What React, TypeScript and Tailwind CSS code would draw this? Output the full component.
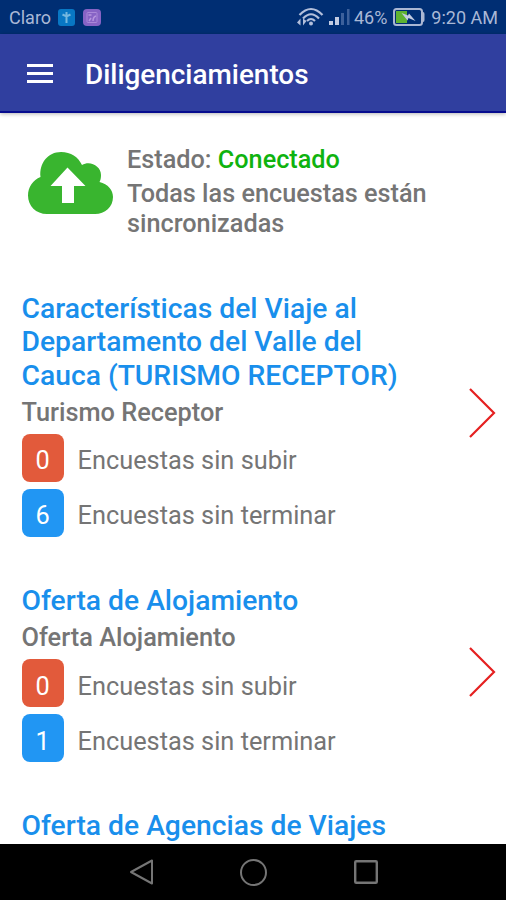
type Survey = {
  title: string[]
  subtitle?: string
  pendingUpload?: number
  pendingFinish?: number
}

const surveys: Survey[] = [
  {
    title: ['Características del Viaje al', 'Departamento del Valle del', 'Cauca (TURISMO RECEPTOR)'],
    subtitle: 'Turismo Receptor',
    pendingUpload: 0,
    pendingFinish: 6,
  },
  {
    title: ['Oferta de Alojamiento'],
    subtitle: 'Oferta Alojamiento',
    pendingUpload: 0,
    pendingFinish: 1,
  },
  { title: ['Oferta de Agencias de Viajes'] },
]

function StatusBar() {
  return (
    <div className="flex h-[34px] shrink-0 items-center bg-[#002e73] pl-[9px] pr-[8px] text-[18px] leading-[34px] text-[#a9b8d6]">
      <span className="pt-[2px]">Claro</span>
      <svg className="ml-[7px]" width="17" height="17" viewBox="0 0 17 17">
        <rect width="17" height="17" rx="3" fill="#0877c4" />
        <path d="M8.5 3v11M4.5 5.500l4 2 4-2" stroke="#74b7df" strokeWidth="2" fill="none" />
      </svg>
      <svg className="ml-[8px]" width="18" height="17" viewBox="0 0 18 17">
        <rect width="18" height="17" rx="4" fill="#8763c5" />
        <rect x="4" y="3.5" width="10" height="10" rx="1" stroke="#a988d8" fill="none" />
        <path d="M6 12l2-3M10 12q0-4 3-5M5.5 6h3" stroke="#b695df" strokeWidth="1.5" fill="none" />
      </svg>

      <div className="flex-1" />

      {/* Wifi */}
      <svg className="mr-[2px]" width="27" height="20" viewBox="0 0 27 20" fill="none" stroke="#b3bfdb" strokeWidth="2.2">
        <path d="M2.5 8Q14 -4 25.5 8M6 11.500Q14 3 22 11.500M10 14Q14 10 18 14" />
        <circle cx="14" cy="16.500" r="2" fill="#b3bfdb" stroke="none" />
        <path d="M0 15.500l3.500-4v7zM9.500 14l-3.500 4.500v-7z" fill="#b3bfdb" stroke="none" />
      </svg>

      {/* Signal */}
      <svg className="ml-[3px]" width="21" height="18" viewBox="0 0 21 18">
        <rect x="0" y="13" width="4" height="4" fill="#c3cce2" />
        <rect x="6" y="9" width="4" height="8" fill="#c3cce2" />
        <rect x="12" y="5" width="3" height="12" fill="#3c609b" />
        <rect x="18" y="1" width="2.500" height="16" fill="#3c609b" />
      </svg>
      <span className="ml-[4px] pt-[2px]">46%</span>

      {/* Battery */}
      <svg className="ml-[6px]" width="32" height="18" viewBox="0 0 32 18">
        <rect x="3" y="3" width="11" height="12" fill="#5eb432" />
        <rect x="1" y="1" width="28" height="16" rx="2.500" stroke="#aab7d3" strokeWidth="2" fill="none" />
        <path d="M30 4q1.500 0 1.500 2v6q0 2-1.500 2z" fill="#aab7d3" />
        <path d="M8.500 5l6.500 2.500 1-2 6.500 7.500-7-3-1 2.500z" fill="#c3cce2" />
      </svg>
      <span className="ml-[6px] pt-[2px]">9:20 AM</span>
    </div>
  )
}

function Header() {
  return (
    <header className="flex h-[79px] shrink-0 items-center border-b-2 border-[#060b8e] bg-[#303f9f] pl-[27px] shadow-[0_1px_4px_rgba(0,0,0,0.3)]">
      <div className="flex w-[26px] flex-col gap-[5px] pt-px">
        <div className="h-[3px] bg-white" />
        <div className="h-[3px] bg-white" />
        <div className="h-[3px] bg-white" />
      </div>
      <h1 className="ml-[32px] pt-[4px] text-[27.9px] font-medium leading-[32px] text-white">Diligenciamientos</h1>
    </header>
  )
}

function SyncState() {
  return (
    <section className="flex h-[179px] shrink-0 pl-[28px] pt-[31px]">
      <svg className="mt-[8px]" width="86" height="63" viewBox="0 0 86 63">
        <path
          d="M19 62C8 62 0 54 0 43.500C0 35 5 28 12.500 25C11 11 20 0 33 0C43 0 50 5 54 13C62 8 73 14 73 23C73 26 72.500 28 71.500 30C80 32 85 38 85 45C85 55 77 62 67 62Z"
          fill="#39b52f"
        />
        <path d="M39.500 15.500L57.500 34H46V51H34V34H22.500Z" fill="#fff" />
      </svg>
      <div className="ml-[13px] text-[25.25px] font-medium leading-[30px] text-[#757575]">
        <p className="pt-px">
          Estado: <span className="text-[#0fb30f]">Conectado</span>
        </p>
        <p className="mt-[4px]">
          Todas las encuestas están
          <br />
          sincronizadas
        </p>
      </div>
    </section>
  )
}

function SurveyCard({ survey }: { survey: Survey }) {
  return (
    <article className="flex shrink-0 items-center justify-between pl-[21.5px] pr-[10px]">
      <div>
        <h2 className="whitespace-nowrap text-[28.25px] font-medium leading-[33.3px] text-[#198fec]">
          {survey.title.map((line) => (
            <span key={line} className="block">{line}</span>
          ))}
        </h2>
        {survey.subtitle && (
          <>
            <p className="pt-[3px] text-[25.35px] font-medium leading-[34px] text-[#757575]">{survey.subtitle}</p>
            <div className="mt-[5px] flex flex-col gap-[7px] text-[25.35px] text-[#757575]">
              <div className="flex items-center">
                <span className="flex h-[48px] w-[42px] items-center justify-center rounded-[8px] bg-[#e25a3b] pt-[5px] text-white">
                  {survey.pendingUpload}
                </span>
                <span className="ml-[14px] pt-[5px]">Encuestas sin subir</span>
              </div>
              <div className="flex items-center">
                <span className="flex h-[48px] w-[42px] items-center justify-center rounded-[8px] bg-[#2196f3] pt-[5px] text-white">
                  {survey.pendingFinish}
                </span>
                <span className="ml-[14px] pt-[5px]">Encuestas sin terminar</span>
              </div>
            </div>
          </>
        )}
      </div>
      {survey.subtitle && (
        <svg className="mb-[3px]" width="27" height="50" viewBox="0 0 27 50">
          <path d="M1 1L25 25L1 49" stroke="#e52020" strokeWidth="2.200" fill="none" />
        </svg>
      )}
    </article>
  )
}

function NavBar() {
  return (
    <nav className="flex h-[56px] shrink-0 items-center bg-black pl-[129px] text-[#757575]">
      <svg width="25" height="28" viewBox="0 0 25 28">
        <path d="M23 2.500V25.500L2 14Z" stroke="currentColor" strokeWidth="2" strokeLinejoin="round" fill="none" />
      </svg>
      <svg className="ml-[86px]" width="28" height="28" viewBox="0 0 28 28">
        <circle cx="13.500" cy="14.500" r="12.500" stroke="currentColor" strokeWidth="2" fill="none" />
      </svg>
      <svg className="ml-[86px]" width="24" height="24" viewBox="0 0 24 24">
        <rect x="1.200" y="1.200" width="21.600" height="21.600" rx="1" stroke="currentColor" strokeWidth="2.400" fill="none" />
      </svg>
    </nav>
  )
}

export default function App() {
  return (
    <div className="flex h-[900px] w-[506px] flex-col overflow-hidden bg-white font-['Roboto',sans-serif]">
      <StatusBar />
      <Header />

      <main className="flex min-h-0 flex-1 flex-col overflow-hidden">
        <SyncState />
        <div className="flex flex-col gap-[47px]">
          {surveys.map((s) => (
            <SurveyCard key={s.title[0]} survey={s} />
          ))}
        </div>
      </main>

      <NavBar />
    </div>
  )
}
